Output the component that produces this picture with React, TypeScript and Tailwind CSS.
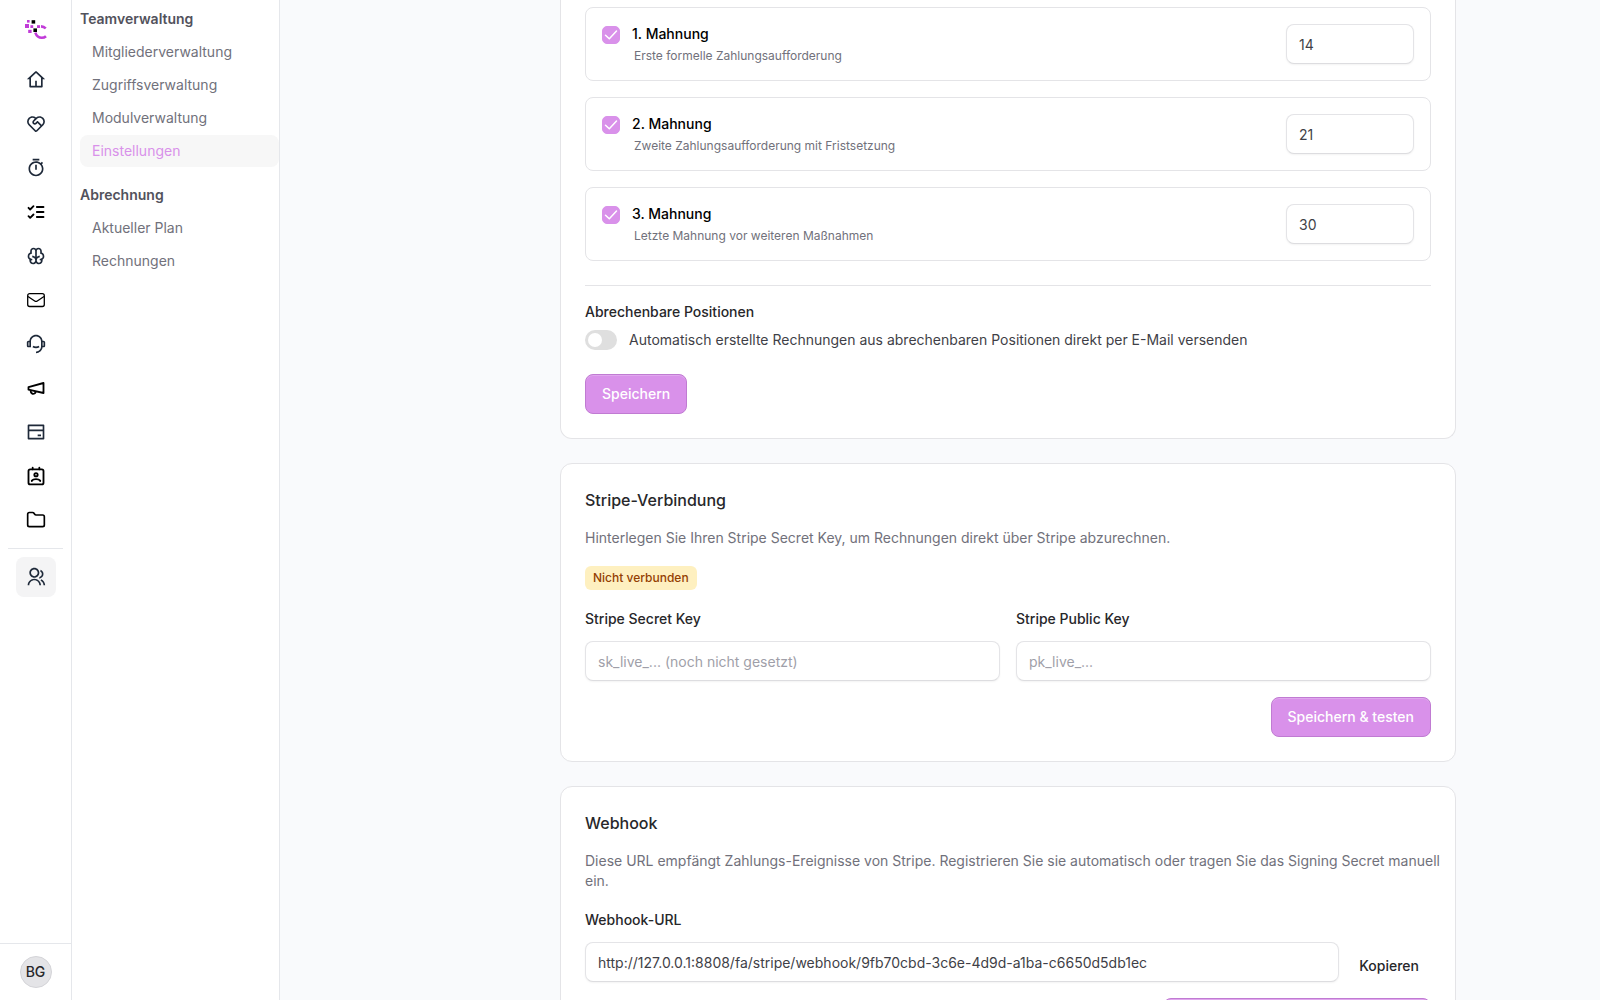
import type { ReactNode } from 'react';
import {
  RiBankCardLine,
  RiBrainLine,
  RiCustomerService2Line,
  RiGroupLine,
  RiHome4Line,
  RiServiceLine,
  RiTimerLine,
} from 'react-icons/ri';
import { LuFolder, LuListChecks, LuMegaphone } from 'react-icons/lu';

function Logo() {
  return (
    <svg width="24" height="24" viewBox="0 0 24 24" aria-hidden="true">
      <g fill="#c13bd8">
        <rect x="3" y="2" width="2.6" height="2.6" />
        <rect x="1" y="6" width="4" height="4" />
        <rect x="6.4" y="7.2" width="2.8" height="2.8" />
        <rect x="13" y="7.2" width="3" height="2.8" />
        <rect x="4.2" y="11.8" width="3.4" height="3.2" />
      </g>
      <g fill="#000">
        <rect x="7.6" y="2.2" width="3.6" height="3.4" />
        <rect x="9.4" y="10.4" width="3.6" height="3.6" />
      </g>
      <g fill="none" stroke="#c13bd8" strokeWidth="2.6">
        <path d="M17 8.4c2 .1 3.400.7 4.800 2" />
        <path d="M11.300 14.600c1.200 3.400 3.600 5.200 6.500 5.200 1.800 0 3-.5 4.200-1.600" />
      </g>
    </svg>
  );
}

function MailIcon() {
  return (
    <svg width="20" height="20" viewBox="0 0 20 20" fill="none" stroke="currentColor" strokeWidth="1.3" strokeLinejoin="round" aria-hidden="true">
      <rect x="1.700" y="3.700" width="16.600" height="12.800" rx="2" />
      <path d="M2 6.500l6.700 4.500a2.400 2.400 0 0 0 2.600 0L18 6.500" />
    </svg>
  );
}

function ContactIcon() {
  return (
    <svg width="20" height="20" viewBox="0 0 24 24" fill="none" stroke="currentColor" strokeWidth="2.2" strokeLinecap="round" strokeLinejoin="round" aria-hidden="true">
      <rect x="3" y="4" width="18" height="18" rx="2" />
      <path d="M8 2v2M16 2v2" />
      <circle cx="12" cy="10.500" r="2" />
      <path d="M7 18v-.5c1-1.300 3-1.800 5-1.800s4 .5 5 1.800v.5" />
    </svg>
  );
}

const modules: { label: string; icon: ReactNode; dark?: boolean }[] = [
  { label: 'Start', icon: <RiHome4Line size={20} /> },
  { label: 'Kunden', icon: <RiServiceLine size={20} /> },
  { label: 'Zeiterfassung', icon: <RiTimerLine size={20} /> },
  { label: 'Aufgaben', icon: <LuListChecks size={20} strokeWidth={2.2} />, dark: true },
  { label: 'Wissen', icon: <RiBrainLine size={20} /> },
  { label: 'E-Mail', icon: <MailIcon />, dark: true },
  { label: 'Support', icon: <RiCustomerService2Line size={20} /> },
  { label: 'Marketing', icon: <LuMegaphone size={20} strokeWidth={2.2} />, dark: true },
  { label: 'Zahlungen', icon: <RiBankCardLine size={20} /> },
  { label: 'Kontakte', icon: <ContactIcon />, dark: true },
  { label: 'Dateien', icon: <LuFolder size={20} />, dark: true },
];

function Rail() {
  return (
    <aside className="flex w-[72px] shrink-0 flex-col border-r border-gray-200 bg-white">
      <div className="flex h-[60px] items-center justify-center">
        <a href="#start" aria-label="Startseite">
          <Logo />
        </a>
      </div>
      <nav className="flex flex-1 flex-col items-center gap-1" aria-label="Module">
        {modules.map((m) => (
          <a
            key={m.label}
            href="#modul"
            aria-label={m.label}
            className={`flex size-10 items-center justify-center rounded-lg ${m.dark ? 'text-black' : 'text-gray-800'}`}
          >
            {m.icon}
          </a>
        ))}
        <div className="flex w-full flex-col items-center gap-2 px-2 pt-1">
          <hr className="w-full border-gray-200" />
          <a href="#team" aria-label="Team" className="flex size-10 items-center justify-center rounded-lg bg-zinc-100 text-gray-800">
            <RiGroupLine size={20} />
          </a>
        </div>
      </nav>
      <div className="flex justify-center border-t border-gray-200 py-3">
        <button className="size-8 rounded-full border border-zinc-300 bg-zinc-200 text-sm font-medium text-zinc-800">BG</button>
      </div>
    </aside>
  );
}

const groups = [
  { title: 'Teamverwaltung', items: ['Mitgliederverwaltung', 'Zugriffsverwaltung', 'Modulverwaltung', 'Einstellungen'] },
  { title: 'Abrechnung', items: ['Aktueller Plan', 'Rechnungen'] },
];

function SideMenu() {
  return (
    <nav className="flex w-52 shrink-0 flex-col gap-3 border-r border-gray-200 bg-white pt-[3px] pl-2" aria-label="Teamverwaltung">
      {groups.map((g) => (
        <section key={g.title} className="flex flex-col gap-px">
          <h2 className="text-sm leading-8 font-semibold text-zinc-600">{g.title}</h2>
          {g.items.map((item) => (
            <a
              key={item}
              href="#seite"
              className={`rounded-lg px-3 text-sm leading-8 ${item === 'Einstellungen' ? 'bg-[#f7f7f7] text-[#d991ea]' : 'text-zinc-500'}`}
            >
              {item}
            </a>
          ))}
        </section>
      ))}
    </nav>
  );
}

const inputClass =
  'h-10 w-full rounded-lg border border-zinc-200 border-b-zinc-300/80 bg-white px-3 text-sm text-zinc-700 shadow-xs placeholder:text-zinc-400 outline-none';

const primaryClass =
  'h-10 rounded-lg border border-[#c07bd2] bg-[#d991ea] px-4 text-sm font-medium text-white shadow-[inset_0_1px_0_rgba(255,255,255,0.2)]';

const reminders = [
  { id: 'm1', title: '1. Mahnung', text: 'Erste formelle Zahlungsaufforderung', days: '14' },
  { id: 'm2', title: '2. Mahnung', text: 'Zweite Zahlungsaufforderung mit Fristsetzung', days: '21' },
  { id: 'm3', title: '3. Mahnung', text: 'Letzte Mahnung vor weiteren Maßnahmen', days: '30' },
];

function ReminderRow({ id, title, text, days }: (typeof reminders)[number]) {
  return (
    <div className="flex items-center justify-between rounded-lg border border-zinc-200 p-4">
      <div>
        <div className="flex gap-3">
          <span className="mt-0.5 grid size-[18px]">
            <input
              id={id}
              type="checkbox"
              defaultChecked
              className="peer col-start-1 row-start-1 size-[18px] appearance-none rounded-[5px] border border-zinc-300 checked:border-[#d991ea] checked:bg-[#d991ea]"
            />
            <svg
              viewBox="0 0 18 18"
              className="pointer-events-none invisible col-start-1 row-start-1 size-[18px] peer-checked:visible"
              fill="none"
              stroke="white"
              strokeWidth="1.500"
              strokeLinecap="round"
              strokeLinejoin="round"
              aria-hidden="true"
            >
              <path d="M3.500 9.200l3.800 3.600L14.500 5" />
            </svg>
          </span>
          <label htmlFor={id} className="text-sm font-medium text-black">
            {title}
          </label>
        </div>
        <p className="mt-1 ml-8 text-xs text-zinc-500">{text}</p>
      </div>
      <div className="w-32">
        <input type="text" inputMode="numeric" defaultValue={days} aria-label={`${title}: Tage`} className={inputClass} />
      </div>
    </div>
  );
}

function Field({ id, label, placeholder }: { id: string; label: string; placeholder: string }) {
  return (
    <div className="flex flex-col gap-3">
      <label htmlFor={id} className="text-sm font-medium text-zinc-800">
        {label}
      </label>
      <input id={id} type="text" placeholder={placeholder} className={inputClass} />
    </div>
  );
}

export default function App() {
  return (
    <div className="flex h-screen overflow-hidden bg-[#f9fafc] font-['Inter',sans-serif] text-zinc-800 antialiased">
      <Rail />
      <SideMenu />
      <main className="min-w-0 flex-1 overflow-hidden">
        <div className="mx-auto flex max-w-[1032px] flex-col gap-6 pl-[136px]">
          <section className="flex flex-col rounded-b-xl border-x border-b border-zinc-200 bg-white px-6 pt-[7px] pb-6">
            <div className="flex flex-col gap-4">
              {reminders.map((r) => (
                <ReminderRow key={r.id} {...r} />
              ))}
            </div>
            <hr className="mt-6 border-zinc-200" />
            <h3 className="mt-4 text-sm font-medium">Abrechenbare Positionen</h3>
            <div className="mt-2 flex items-center gap-3">
              <input
                id="auto"
                type="checkbox"
                role="switch"
                className="flex h-5 w-8 appearance-none items-center rounded-full bg-[#dfdfdf] px-[3px] before:size-3.5 before:rounded-full before:bg-white checked:bg-[#d991ea] checked:before:translate-x-3"
              />
              <label htmlFor="auto" className="text-sm text-zinc-700">
                Automatisch erstellte Rechnungen aus abrechenbaren Positionen direkt per E-Mail versenden
              </label>
            </div>
            <button className={`mt-6 self-start ${primaryClass}`}>Speichern</button>
          </section>

          <section className="flex flex-col rounded-xl border border-zinc-200 bg-white p-6">
            <h2 className="text-base font-medium">Stripe-Verbindung</h2>
            <p className="mt-4 text-sm text-zinc-500">Hinterlegen Sie Ihren Stripe Secret Key, um Rechnungen direkt über Stripe abzurechnen.</p>
            <span className="mt-[18px] self-start rounded-md bg-[#fef0c0] px-2 py-1 text-xs font-medium text-[#943f02]">Nicht verbunden</span>
            <div className="mt-[19px] grid grid-cols-2 gap-4">
              <Field id="secret" label="Stripe Secret Key" placeholder="sk_live_... (noch nicht gesetzt)" />
              <Field id="public" label="Stripe Public Key" placeholder="pk_live_..." />
            </div>
            <button className={`mt-4 self-end ${primaryClass}`}>Speichern &amp; testen</button>
          </section>

          <section className="flex flex-col rounded-xl border border-zinc-200 bg-white p-6">
            <h2 className="text-base font-medium">Webhook</h2>
            <p className="mt-4 -mr-3 text-sm text-zinc-500">
              Diese URL empfängt Zahlungs-Ereignisse von Stripe. Registrieren Sie sie automatisch oder tragen Sie das Signing Secret manuell ein.
            </p>
            <label htmlFor="hook" className="mt-[19px] text-sm font-medium">
              Webhook-URL
            </label>
            <div className="mt-3 flex items-end gap-2">
              <input
                id="hook"
                type="text"
                readOnly
                defaultValue="http://127.0.0.1:8808/fa/stripe/webhook/9fb70cbd-3c6e-4d9d-a1ba-c6650d5db1ec"
                className={inputClass}
              />
              <button className="h-8 rounded-md px-3 text-sm font-medium">Kopieren</button>
            </div>
            <button aria-label="Webhook registrieren" className={`mt-4 w-[268px] self-end ${primaryClass}`} />
          </section>
        </div>
      </main>
    </div>
  );
}
